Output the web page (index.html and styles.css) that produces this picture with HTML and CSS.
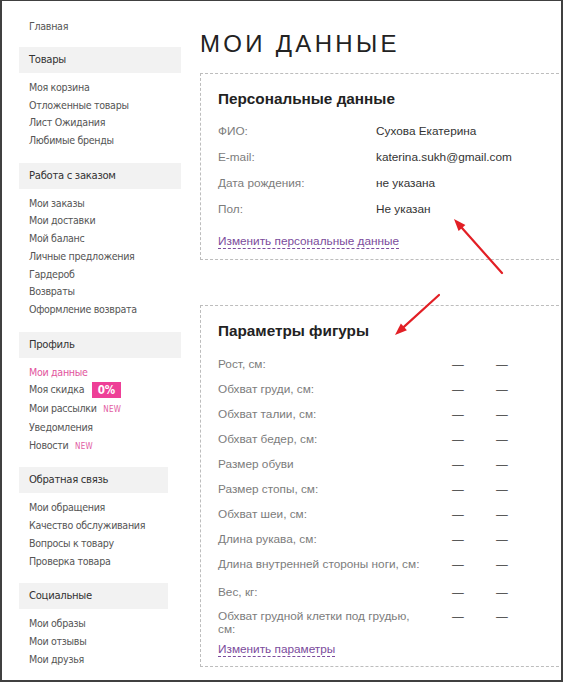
FILE: index.html
```html
<!DOCTYPE html>
<html lang="ru">
<head>
<meta charset="utf-8">
<title>Мои данные</title>
<link rel="stylesheet" href="styles.css">
</head>
<body>
<div class="frame">
  <aside class="sidebar">
    <a class="home">Главная</a>
    <section class="group">
      <h3 class="group-title">Товары</h3>
      <ul class="group-list">
        <li>Моя корзина</li>
        <li>Отложенные товары</li>
        <li>Лист Ожидания</li>
        <li>Любимые бренды</li>
      </ul>
    </section>
    <section class="group">
      <h3 class="group-title">Работа с заказом</h3>
      <ul class="group-list">
        <li>Мои заказы</li>
        <li>Мои доставки</li>
        <li>Мой баланс</li>
        <li>Личные предложения</li>
        <li>Гардероб</li>
        <li>Возвраты</li>
        <li>Оформление возврата</li>
      </ul>
    </section>
    <section class="group group-profile">
      <h3 class="group-title">Профиль</h3>
      <ul class="group-list">
        <li class="active">Мои данные</li>
        <li>Моя скидка <span class="badge">0%</span></li>
        <li class="tall">Мои рассылки <span class="new">NEW</span></li>
        <li class="taller">Уведомления</li>
        <li class="short">Новости <span class="new">NEW</span></li>
      </ul>
    </section>
    <section class="group group-narrow">
      <h3 class="group-title">Обратная связь</h3>
      <ul class="group-list">
        <li>Мои обращения</li>
        <li>Качество обслуживания</li>
        <li>Вопросы к товару</li>
        <li>Проверка товара</li>
      </ul>
    </section>
    <section class="group group-narrow">
      <h3 class="group-title">Социальные</h3>
      <ul class="group-list">
        <li>Мои образы</li>
        <li>Мои отзывы</li>
        <li>Мои друзья</li>
      </ul>
    </section>
  </aside>

  <main class="content">
    <h1 class="page-title">Мои данные</h1>

    <section class="card card-personal">
      <h2 class="card-title">Персональные данные</h2>
      <div class="info-row"><span class="label">ФИО:</span><span class="value">Сухова Екатерина</span></div>
      <div class="info-row"><span class="label">E-mail:</span><span class="value">katerina.sukh@gmail.com</span></div>
      <div class="info-row"><span class="label">Дата рождения:</span><span class="value">не указана</span></div>
      <div class="info-row"><span class="label">Пол:</span><span class="value">Не указан</span></div>
      <a class="edit-link edit-personal">Изменить персональные данные</a>
    </section>

    <section class="card card-params">
      <h2 class="card-title">Параметры фигуры</h2>
      <div class="param-row"><span class="label">Рост, см:</span><span class="dash">—</span><span class="dash">—</span></div>
      <div class="param-row"><span class="label">Обхват груди, см:</span><span class="dash">—</span><span class="dash">—</span></div>
      <div class="param-row"><span class="label">Обхват талии, см:</span><span class="dash">—</span><span class="dash">—</span></div>
      <div class="param-row"><span class="label">Обхват бедер, см:</span><span class="dash">—</span><span class="dash">—</span></div>
      <div class="param-row"><span class="label">Размер обуви</span><span class="dash">—</span><span class="dash">—</span></div>
      <div class="param-row"><span class="label">Размер стопы, см:</span><span class="dash">—</span><span class="dash">—</span></div>
      <div class="param-row"><span class="label">Обхват шеи, см:</span><span class="dash">—</span><span class="dash">—</span></div>
      <div class="param-row"><span class="label">Длина рукава, см:</span><span class="dash">—</span><span class="dash">—</span></div>
      <div class="param-row"><span class="label">Длина внутренней стороны ноги, см:</span><span class="dash">—</span><span class="dash">—</span></div>
      <div class="param-row param-row-late"><span class="label">Вес, кг:</span><span class="dash">—</span><span class="dash">—</span></div>
      <div class="param-row param-row-wrap"><span class="label">Обхват грудной клетки под грудью, см:</span><span class="dash">—</span><span class="dash">—</span></div>
      <a class="edit-link edit-params">Изменить параметры</a>
    </section>
  </main>

  <svg class="arrows" width="563" height="682" viewBox="0 0 563 682" aria-hidden="true">
    <line x1="502" y1="273" x2="462" y2="228" stroke="#e21f25" stroke-width="2.2" stroke-linecap="round"/>
    <polygon points="454,219 465.4,225 458.6,231" fill="#e21f25"/>
    <line x1="439" y1="295" x2="403.9" y2="326.9" stroke="#e21f25" stroke-width="2.2" stroke-linecap="round"/>
    <polygon points="395,335 406.9,330.2 400.9,323.6" fill="#e21f25"/>
  </svg>
</div>
</body>
</html>
```

FILE: styles.css
```css
html, body {
  margin: 0;
  padding: 0;
  background: #fff;
}

.frame {
  position: relative;
  box-sizing: border-box;
  width: 563px;
  height: 682px;
  border: 2px solid #404040;
  border-top-width: 1px;
  overflow: hidden;
  display: flex;
  align-items: flex-start;
}

/* Sidebar */
.sidebar {
  flex: none;
  width: 162px;
  padding: 15.5px 0 0 17px;
  font-family: "DejaVu Sans Condensed", "DejaVu Sans", sans-serif;
  font-stretch: semi-condensed;
  font-size: 10.6px;
  letter-spacing: -0.3px;
  color: #555;
}

.home {
  display: block;
  line-height: 18px;
  padding-left: 10px;
  margin-bottom: 12.5px;
  color: #555;
}

.group {
  margin-bottom: 13px;
}

.group-profile {
  margin-bottom: 14.5px;
}

.group-title {
  box-sizing: border-box;
  margin: 0;
  height: 26px;
  line-height: 26px;
  padding-left: 10px;
  background: #f2f2f2;
  font-size: 11.2px;
  font-weight: normal;
  color: #333;
}

.group-narrow .group-title {
  width: 149px;
}

.group-list {
  list-style: none;
  margin: 6px 0 0;
  padding: 0 0 0 10px;
  line-height: 17.7px;
}

.group-list li {
  height: 17.7px;
  white-space: nowrap;
}

.group-list li.tall {
  height: 18.5px;
  line-height: 18.5px;
}

.group-list li.taller {
  height: 19.5px;
  line-height: 21px;
}

.group-list li.short {
  height: 16px;
  line-height: 16px;
}

.group-list li.active {
  color: #e2559d;
}

.badge {
  display: inline-block;
  width: 29px;
  height: 16px;
  line-height: 16px;
  margin-left: 5px;
  background: #ee3f97;
  color: #fff;
  font-size: 11.5px;
  font-weight: bold;
  letter-spacing: 0;
  text-align: center;
  vertical-align: middle;
}

.new {
  margin-left: 4px;
  font-size: 8px;
  color: #e25ca2;
  letter-spacing: 0.3px;
}

/* Content */
.content {
  flex: 1;
  margin: 0 -3px 0 19px;
  padding-top: 29px;
  font-family: "Liberation Sans", Arial, sans-serif;
  font-size: 11.8px;
  color: #333;
}

.page-title {
  margin: 0 0 15px;
  font-size: 24px;
  line-height: 28px;
  font-weight: normal;
  letter-spacing: 3.3px;
  text-transform: uppercase;
  color: #222;
}

.card {
  border: 1px dashed #bdbdbd;
  padding: 15px 17px 10px;
}

.card-params {
  margin-top: 45px;
  padding-bottom: 9px;
}

.card-title {
  margin: 0 0 9px;
  font-size: 15.3px;
  line-height: 20px;
  font-weight: bold;
  color: #222;
}

.card-params .card-title {
  margin-bottom: 10.5px;
}

.info-row {
  display: flex;
  padding: 6px 0;
  line-height: 14px;
}

.label {
  color: #7c7c7c;
}

.info-row .label {
  flex: none;
  width: 158px;
}

.value {
  color: #333;
}

.param-row {
  display: grid;
  grid-template-columns: 234px 44px 44px;
  padding: 5.5px 0;
  line-height: 14px;
}

.param-row-late {
  padding-top: 8px;
}

.param-row-wrap {
  line-height: 13.5px;
}

.param-row .label {
  padding-right: 28px;
}

.dash {
  color: #333;
}

.edit-link {
  display: inline-block;
  line-height: 13px;
  color: #7b4b9c;
  border-bottom: 1px dashed #7b4b9c;
}

.edit-personal {
  margin-top: 13px;
}

.edit-params {
  margin-top: 0.5px;
}

/* Annotation arrows over the content */
.arrows {
  position: absolute;
  left: -2px;
  top: -1px;
  pointer-events: none;
}
```
